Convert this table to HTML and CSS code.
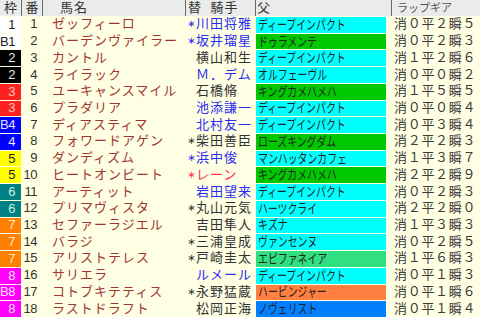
FILE: index.html
```html
<!DOCTYPE html>
<html lang="ja">
<head>
<meta charset="utf-8">
<title>ラップギア</title>
<link rel="stylesheet" href="styles.css">
</head>
<body>
<div class="table">
  <div class="head">
    <div class="h h-waku">枠</div>
    <div class="h h-num">番</div>
    <div class="h h-name">馬名</div>
    <div class="h h-jockey">替 騎手</div>
    <div class="h h-sire">父</div>
    <div class="h h-lap">ラップギア</div>
  </div>

  <div class="row"><div class="waku w1">1</div><div class="num">1</div><div class="name">ゼッフィーロ</div><div class="jockey blue"><span class="mark">∗</span>川田将雅</div><div class="sire s-cyan"><span class="st">ディープインパクト</span></div><div class="lap">消０平２瞬５</div></div>
  <div class="row"><div class="waku w1">B1</div><div class="num">2</div><div class="name">バーデンヴァイラー</div><div class="jockey blue"><span class="mark">∗</span>坂井瑠星</div><div class="sire s-green"><span class="st">ドゥラメンテ</span></div><div class="lap">消０平２瞬３</div></div>
  <div class="row"><div class="waku w2">2</div><div class="num">3</div><div class="name">カントル</div><div class="jockey"><span class="mark"></span>横山和生</div><div class="sire s-cyan"><span class="st">ディープインパクト</span></div><div class="lap">消１平２瞬６</div></div>
  <div class="row"><div class="waku w2">2</div><div class="num">4</div><div class="name">ライラック</div><div class="jockey blue"><span class="mark"></span>Ｍ．デム</div><div class="sire s-cyan"><span class="st">オルフェーヴル</span></div><div class="lap">消０平０瞬２</div></div>
  <div class="row"><div class="waku w3">3</div><div class="num">5</div><div class="name">ユーキャンスマイル</div><div class="jockey"><span class="mark"></span>石橋脩</div><div class="sire s-green"><span class="st">キングカメハメハ</span></div><div class="lap">消１平５瞬５</div></div>
  <div class="row"><div class="waku w3">3</div><div class="num">6</div><div class="name">プラダリア</div><div class="jockey blue"><span class="mark"></span>池添謙一</div><div class="sire s-cyan"><span class="st">ディープインパクト</span></div><div class="lap">消０平０瞬４</div></div>
  <div class="row"><div class="waku w4">B4</div><div class="num">7</div><div class="name">ディアスティマ</div><div class="jockey blue"><span class="mark"></span>北村友一</div><div class="sire s-cyan"><span class="st">ディープインパクト</span></div><div class="lap">消０平３瞬４</div></div>
  <div class="row"><div class="waku w4">4</div><div class="num">8</div><div class="name">フォワードアゲン</div><div class="jockey"><span class="mark">∗</span>柴田善臣</div><div class="sire s-green"><span class="st">ローズキングダム</span></div><div class="lap">消２平２瞬３</div></div>
  <div class="row"><div class="waku w5">5</div><div class="num">9</div><div class="name">ダンディズム</div><div class="jockey blue"><span class="mark">∗</span>浜中俊</div><div class="sire s-cyan"><span class="st">マンハッタンカフェ</span></div><div class="lap">消１平３瞬７</div></div>
  <div class="row"><div class="waku w5">5</div><div class="num">10</div><div class="name">ヒートオンビート</div><div class="jockey red"><span class="mark">∗</span>レーン</div><div class="sire s-green"><span class="st">キングカメハメハ</span></div><div class="lap">消２平２瞬９</div></div>
  <div class="row"><div class="waku w6">6</div><div class="num">11</div><div class="name">アーティット</div><div class="jockey blue"><span class="mark"></span>岩田望来</div><div class="sire s-cyan"><span class="st">ディープインパクト</span></div><div class="lap">消０平２瞬３</div></div>
  <div class="row"><div class="waku w6">6</div><div class="num">12</div><div class="name">プリマヴィスタ</div><div class="jockey"><span class="mark">∗</span>丸山元気</div><div class="sire s-cyan"><span class="st">ハーツクライ</span></div><div class="lap">消２平２瞬０</div></div>
  <div class="row"><div class="waku w7">7</div><div class="num">13</div><div class="name">セファーラジエル</div><div class="jockey"><span class="mark"></span>吉田隼人</div><div class="sire s-cyan"><span class="st">キズナ</span></div><div class="lap">消１平３瞬３</div></div>
  <div class="row"><div class="waku w7">7</div><div class="num">14</div><div class="name">バラジ</div><div class="jockey"><span class="mark">∗</span>三浦皇成</div><div class="sire s-cyan"><span class="st">ヴァンセンヌ</span></div><div class="lap">消０平２瞬５</div></div>
  <div class="row"><div class="waku w7">7</div><div class="num">15</div><div class="name">アリストテレス</div><div class="jockey"><span class="mark">∗</span>戸崎圭太</div><div class="sire s-spring"><span class="st">エピファネイア</span></div><div class="lap">消１平６瞬３</div></div>
  <div class="row"><div class="waku w8">8</div><div class="num">16</div><div class="name">サリエラ</div><div class="jockey blue"><span class="mark"></span>ルメール</div><div class="sire s-cyan"><span class="st">ディープインパクト</span></div><div class="lap">消０平１瞬３</div></div>
  <div class="row"><div class="waku w8">B8</div><div class="num">17</div><div class="name">コトブキテティス</div><div class="jockey"><span class="mark">∗</span>永野猛蔵</div><div class="sire s-orange"><span class="st">ハービンジャー</span></div><div class="lap">消０平１瞬６</div></div>
  <div class="row"><div class="waku w8">8</div><div class="num">18</div><div class="name">ラストドラフト</div><div class="jockey"><span class="mark"></span>松岡正海</div><div class="sire s-blue"><span class="st">ノヴェリスト</span></div><div class="lap">消０平１瞬４</div></div>
</div>
</body>
</html>
```

FILE: styles.css
```css
html, body {
  margin: 0;
  padding: 0;
  background: #ffffe4;
}

body {
  font-family: "Liberation Sans", "Noto Sans CJK JP", sans-serif;
  color: #333333;
  width: 480px;
  height: 317px;
  overflow: hidden;
}

.table {
  display: flex;
  flex-direction: column;
  height: 317px;
}

.head,
.row {
  display: grid;
  grid-template-columns: 21px 21px 143px 70px 136px 89px;
}

.head {
  height: 16px;
  flex: none;
  background: #ebebeb;
}

.h {
  font-size: 13px;
  line-height: 16px;
  white-space: nowrap;
  color: #333333;
}

.h + .h {
  border-left: 1px solid #6a6a6a;
}

.h-waku { text-align: center; }
.h-num { text-align: center; }
.h-name { padding-left: 17px; letter-spacing: 1px; }
.h-jockey { padding-left: 2px; word-spacing: 4px; letter-spacing: 1px; }
.h-sire { padding-left: 1px; }
.h-lap { padding-left: 5px; font-size: 11px; color: #555555; }

.row {
  flex: 1;
  min-height: 0;
  font-size: 13px;
}

.row > div {
  display: flex;
  align-items: center;
  white-space: nowrap;
  line-height: 14px;
}

.waku {
  justify-content: flex-end;
  padding-right: 6px;
  margin-top: 1px;
  letter-spacing: -0.5px;
}

.w1 { background: #ffffff; color: #222222; }
.w2 { background: #000000; color: #e8e8e8; }
.w3 { background: #ff2020; color: #ffc8c8; }
.w4 { background: #0000ff; color: #e0e0ff; }
.w5 { background: #ffff00; color: #222222; }
.w6 { background: #008080; color: #d0ecec; }
.w7 { background: #ff8000; color: #ffe8d0; }
.w8 { background: #ff00ff; color: #ffe0ff; }

.num {
  justify-content: flex-end;
  padding-right: 5px;
  letter-spacing: -0.5px;
  color: #333333;
}

.name {
  padding-left: 10px;
  letter-spacing: 1px;
  color: #a03434;
}

.jockey {
  padding-left: 2px;
  letter-spacing: 1px;
  color: #333333;
}

.jockey.blue { color: #2c2cf0; }
.jockey.red { color: #ff3050; }

.mark {
  display: inline-block;
  width: 9px;
  letter-spacing: 0;
  font-family: "DejaVu Sans", sans-serif;
  font-size: 10px;
}

.sire {
  margin: 1px 5px 0 1px;
  padding-left: 2px;
  color: #222222;
}

.st {
  display: inline-block;
  font-size: 13px;
  transform: scaleX(0.76);
  transform-origin: left center;
}

.s-cyan { background: #00ffff; }
.s-green { background: #00c800; }
.s-spring { background: #30e080; }
.s-orange { background: #ff8040; }
.s-blue { background: #0080ff; }

.lap {
  padding-left: 3px;
  letter-spacing: 0.7px;
  color: #3a3a3a;
}
```
